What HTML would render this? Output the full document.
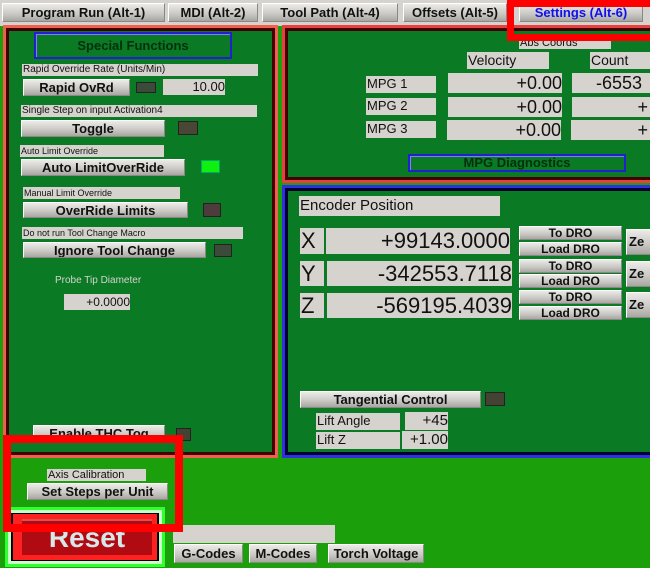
<!DOCTYPE html>
<html><head><style>
*{margin:0;padding:0;box-sizing:border-box}
body{width:650px;height:568px;overflow:hidden;background:#1ba00b;position:relative;font-family:"Liberation Sans",sans-serif}
.a{position:absolute}
.btn{position:absolute;background:linear-gradient(#ecebe8,#c9c7c2 60%,#a8a6a2);border:1px solid #8a8884;border-top-color:#fff;border-left-color:#fff;font-weight:bold;font-size:13px;color:#111;text-align:center;line-height:15px;white-space:nowrap;overflow:hidden}
.lbl{position:absolute;background:#d6d3ce;font-size:10px;color:#111;line-height:12px;white-space:nowrap;overflow:hidden;padding-left:1px}
.fld{position:absolute;background:#d6d3ce;color:#111;text-align:right;white-space:nowrap;overflow:hidden}
.led{position:absolute;background:#3c4a3a;border:1px solid #222}
.pan{position:absolute;background:#0b7a25}
</style></head><body>
<div class="a" style="left:0;top:0;width:650px;height:26px;background:#d6d3ce"></div>
<div class="btn" style="left:2px;top:3px;width:163px;height:19px;line-height:17px">Program Run (Alt-1)</div>
<div class="btn" style="left:168px;top:3px;width:90px;height:19px;line-height:17px">MDI (Alt-2)</div>
<div class="btn" style="left:262px;top:3px;width:136px;height:19px;line-height:17px">Tool Path (Alt-4)</div>
<div class="btn" style="left:403px;top:3px;width:104px;height:19px;line-height:17px">Offsets (Alt-5)</div>
<div class="btn" style="left:519px;top:3px;width:124px;height:19px;line-height:17px;color:#1010ee">Settings (Alt-6)</div>

<!-- left panel -->
<div class="pan" style="left:3px;top:25px;width:275px;height:433px;border:3px solid #f06050;box-shadow:inset 0 0 0 3px #400"></div>
<div class="a" style="left:34px;top:32px;width:198px;height:27px;border:2px solid #2020d0;box-shadow:inset 1px 1px 0 #8080ff;background:#0b7a25;font-weight:bold;font-size:13px;color:#053010;text-align:center;line-height:23px">Special Functions</div>
<div class="lbl" style="left:22px;top:64px;width:236px">Rapid Override Rate (Units/Min)</div>
<div class="btn" style="left:23px;top:79px;width:107px;height:17px">Rapid OvRd</div>
<div class="led" style="left:136px;top:82px;width:20px;height:11px"></div>
<div class="fld" style="left:163px;top:79px;width:62px;height:16px;font-size:13px;line-height:16px">10.00</div>
<div class="lbl" style="left:21px;top:105px;width:236px">Single Step on input Activation4</div>
<div class="btn" style="left:21px;top:120px;width:144px;height:17px">Toggle</div>
<div class="led" style="left:178px;top:121px;width:20px;height:14px;background:#4a4636"></div>
<div class="lbl" style="left:20px;top:145px;width:144px;font-size:9px">Auto Limit Override</div>
<div class="btn" style="left:21px;top:159px;width:164px;height:17px">Auto LimitOverRide</div>
<div class="led" style="left:201px;top:160px;width:19px;height:13px;background:#10f010;border-color:#0a6"></div>
<div class="lbl" style="left:23px;top:187px;width:157px;font-size:9px">Manual Limit Override</div>
<div class="btn" style="left:23px;top:202px;width:165px;height:16px">OverRide Limits</div>
<div class="led" style="left:203px;top:203px;width:18px;height:14px;background:#4e3c3c"></div>
<div class="lbl" style="left:22px;top:227px;width:221px;font-size:9px">Do not run Tool Change Macro</div>
<div class="btn" style="left:23px;top:242px;width:183px;height:16px">Ignore Tool Change</div>
<div class="led" style="left:214px;top:244px;width:18px;height:13px"></div>
<div class="a" style="left:55px;top:275px;font-size:10px;color:#d6d3ce">Probe Tip Diameter</div>
<div class="fld" style="left:64px;top:294px;width:66px;height:16px;font-size:12px;line-height:16px">+0.0000</div>
<div class="btn" style="left:33px;top:425px;width:132px;height:17px">Enable THC Tog</div>
<div class="led" style="left:176px;top:428px;width:15px;height:13px;background:#444232"></div>

<!-- right top -->
<div class="pan" style="left:282px;top:25px;width:372px;height:158px;border:3px solid #e84040;border-right:none;box-shadow:inset 0 0 0 3px #400"></div>
<div class="lbl" style="left:519px;top:37px;width:92px;font-size:11px">Abs Coords</div>
<div class="lbl" style="left:467px;top:52px;width:82px;height:17px;font-size:14px;line-height:16px">Velocity</div>
<div class="lbl" style="left:590px;top:52px;width:60px;height:17px;font-size:14px;line-height:16px">Count</div>
<div class="lbl" style="left:366px;top:76px;width:70px;height:17px;font-size:13px;line-height:16px">MPG 1</div>
<div class="lbl" style="left:366px;top:98px;width:70px;height:17px;font-size:13px;line-height:16px">MPG 2</div>
<div class="lbl" style="left:366px;top:121px;width:70px;height:17px;font-size:13px;line-height:16px">MPG 3</div>
<div class="fld" style="left:448px;top:73px;width:114px;height:20px;font-size:18px;line-height:20px">+0.00</div>
<div class="fld" style="left:448px;top:97px;width:114px;height:20px;font-size:18px;line-height:20px">+0.00</div>
<div class="fld" style="left:447px;top:120px;width:114px;height:20px;font-size:18px;line-height:20px">+0.00</div>
<div class="fld" style="left:572px;top:73px;width:78px;height:20px;font-size:18px;line-height:20px;text-align:left;padding-left:24px">-6553</div>
<div class="fld" style="left:572px;top:97px;width:78px;height:20px;font-size:18px;line-height:20px;padding-right:2px">+</div>
<div class="fld" style="left:571px;top:120px;width:79px;height:20px;font-size:18px;line-height:20px;padding-right:2px">+</div>
<div class="a" style="left:408px;top:154px;width:218px;height:18px;border:2px solid #2020d0;box-shadow:inset 1px 1px 0 #8080ff;background:#0b7a25;font-weight:bold;font-size:13px;color:#053010;text-align:center;line-height:14px">MPG Diagnostics</div>

<!-- right bottom -->
<div class="pan" style="left:282px;top:185px;width:372px;height:273px;border:3px solid #3030e0;border-right:none;box-shadow:inset 0 0 0 3px #003"></div>
<div class="lbl" style="left:299px;top:196px;width:201px;height:20px;font-size:15px;line-height:19px">Encoder Position</div>
<div class="lbl" style="left:300px;top:228px;width:24px;height:26px;font-size:22px;line-height:26px">X</div>
<div class="lbl" style="left:300px;top:261px;width:24px;height:25px;font-size:22px;line-height:26px">Y</div>
<div class="lbl" style="left:300px;top:293px;width:24px;height:25px;font-size:22px;line-height:26px">Z</div>
<div class="fld" style="left:326px;top:228px;width:184px;height:26px;font-size:22px;line-height:26px">+99143.0000</div>
<div class="fld" style="left:327px;top:261px;width:185px;height:25px;font-size:22px;line-height:26px">-342553.7118</div>
<div class="fld" style="left:327px;top:293px;width:185px;height:25px;font-size:22px;line-height:26px">-569195.4039</div>
<div class="btn" style="left:519px;top:226px;width:103px;height:14px;font-size:12px;line-height:12px">To DRO</div>
<div class="btn" style="left:519px;top:242px;width:103px;height:14px;font-size:12px;line-height:12px">Load DRO</div>
<div class="btn" style="left:519px;top:259px;width:103px;height:14px;font-size:12px;line-height:12px">To DRO</div>
<div class="btn" style="left:519px;top:274px;width:103px;height:14px;font-size:12px;line-height:12px">Load DRO</div>
<div class="btn" style="left:519px;top:290px;width:103px;height:14px;font-size:12px;line-height:12px">To DRO</div>
<div class="btn" style="left:519px;top:306px;width:103px;height:14px;font-size:12px;line-height:12px">Load DRO</div>
<div class="btn" style="left:626px;top:229px;width:30px;height:26px;line-height:24px;text-align:left;padding-left:2px">Ze</div>
<div class="btn" style="left:626px;top:261px;width:30px;height:26px;line-height:24px;text-align:left;padding-left:2px">Ze</div>
<div class="btn" style="left:626px;top:292px;width:30px;height:26px;line-height:24px;text-align:left;padding-left:2px">Ze</div>
<div class="btn" style="left:300px;top:391px;width:181px;height:17px">Tangential Control</div>
<div class="led" style="left:485px;top:392px;width:20px;height:14px;background:#444232"></div>
<div class="lbl" style="left:316px;top:413px;width:84px;height:17px;font-size:13px;line-height:16px">Lift Angle</div>
<div class="lbl" style="left:316px;top:432px;width:84px;height:17px;font-size:13px;line-height:16px">Lift Z</div>
<div class="fld" style="left:405px;top:412px;width:43px;height:18px;font-size:15px;line-height:18px">+45</div>
<div class="fld" style="left:402px;top:431px;width:46px;height:18px;font-size:15px;line-height:18px">+1.00</div>

<!-- bottom -->
<div class="lbl" style="left:47px;top:469px;width:99px;font-size:11px">Axis Calibration</div>
<div class="btn" style="left:27px;top:483px;width:141px;height:17px">Set Steps per Unit</div>
<div class="a" style="left:5px;top:507px;width:160px;height:60px;background:#000;border:3px solid #30ff30;box-shadow:inset 0 0 0 3px #caffca"></div>
<div class="a" style="left:13px;top:514px;width:144px;height:46px;background:#ff2020"></div>
<div class="a" style="left:22px;top:519px;width:130px;height:36px;background:#b00b12;border-top:2px solid #e05050;color:#d8e8e8;font-weight:bold;font-size:28px;text-align:center;line-height:34px;overflow:hidden">Reset</div>
<div class="lbl" style="left:173px;top:525px;width:162px;height:18px"></div>
<div class="btn" style="left:174px;top:544px;width:69px;height:19px;line-height:17px">G-Codes</div>
<div class="btn" style="left:249px;top:544px;width:68px;height:19px;line-height:17px">M-Codes</div>
<div class="btn" style="left:328px;top:544px;width:96px;height:19px;line-height:17px">Torch Voltage</div>

<!-- red highlight boxes -->
<div class="a" style="left:507px;top:0;width:150px;height:41px;border:7px solid #ff0000"></div>
<div class="a" style="left:3px;top:435px;width:180px;height:97px;border:8px solid #ff0000"></div>
</body></html>
